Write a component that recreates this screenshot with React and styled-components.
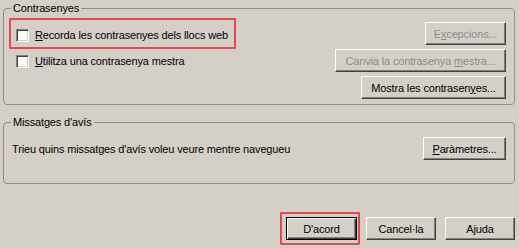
import React from 'react'
import styled, { createGlobalStyle } from 'styled-components'

const GlobalStyle = createGlobalStyle`
    body {
        margin: 0;
        background: #d4d0c8;
        font-family: "Liberation Sans", Arial, sans-serif;
        font-size: 11px;
        letter-spacing: -0.15px;
        color: #000;
    }
`

const Page = styled.div`
    display: flex;
    flex-direction: column;
    width: 519px;
    height: 248px;
    box-sizing: border-box;
    padding: 2px 4px 0 3px;
`

const Group = styled.fieldset`
    margin: 0 0 ${props => props.$gap || 0}px 0;
    padding: ${props => props.$pad};
    border: 1px solid #8e8e8e;
    border-radius: 4px;
    min-width: 0;
`

const Legend = styled.legend`
    padding: 0 2px;
    margin-left: 0;
    line-height: 13px;
`

const GroupRow = styled.div`
    display: flex;
    align-items: ${props => props.$align || 'flex-start'};
`

const Checks = styled.div`
    flex: 1;
    display: flex;
    flex-direction: column;
    gap: 13px;
    padding: 7px 0 0 5px;
`

const CheckRow = styled.label`
    position: relative;
    display: flex;
    align-items: center;
    gap: 6px;
    height: 13px;
    line-height: 13px;
    width: fit-content;
    ${props => props.$marked && `
        &::after {
            content: '';
            position: absolute;
            left: -7px;
            right: -8px;
            top: -11px;
            bottom: -7px;
            border: 2px solid #e5484d;
            border-radius: 1px;
        }
    `}
`

const CheckBox = styled.span`
    width: 13px;
    height: 13px;
    box-sizing: border-box;
    background: #fff;
    border: 1px solid;
    border-color: #808080 #fff #fff #808080;
    box-shadow: inset 1px 1px #404040, inset -1px -1px #d4d0c8;
    flex-shrink: 0;
`

const ButtonStack = styled.div`
    display: flex;
    flex-direction: column;
    align-items: flex-end;
    gap: 4px;
`

const Button = styled.button`
    position: relative;
    width: ${props => props.$w}px;
    height: 23px;
    box-sizing: border-box;
    padding: 0;
    font-family: inherit;
    font-size: 11px;
    letter-spacing: -0.15px;
    color: ${props => props.disabled ? '#8d8d8d' : '#000'};
    background: #d4d0c8;
    border: 1px solid;
    border-color: #fff #404040 #404040 #fff;
    box-shadow: inset -1px -1px #808080;
    ${props => props.$isDefault && `
        border: 1px solid #000;
        box-shadow: inset 1px 1px #fff, inset -1px -1px #404040, inset -2px -2px #808080;
    `}
    ${props => props.$marked && `
        &::after {
            content: '';
            position: absolute;
            left: -7px;
            right: -4px;
            top: -6px;
            bottom: -6px;
            border: 2px solid #e5484d;
            border-radius: 1px;
        }
    `}
`

const Info = styled.div`
    flex: 1;
    padding-left: 1px;
`

const Footer = styled.div`
    display: flex;
    justify-content: flex-end;
    gap: 9px;
`

export default function App() {
    return (
        <Page>
            <GlobalStyle />
            <Group $pad="7px 8px 5px 7px" $gap={11}>
                <Legend>Contrasenyes</Legend>
                <GroupRow>
                    <Checks>
                        <CheckRow $marked>
                            <CheckBox />
                            <span><u>R</u>ecorda les contrasenyes dels llocs web</span>
                        </CheckRow>
                        <CheckRow>
                            <CheckBox />
                            <span><u>U</u>tilitza una contrasenya mestra</span>
                        </CheckRow>
                    </Checks>
                    <ButtonStack>
                        <Button $w={81} disabled>E<u>x</u>cepcions...</Button>
                        <Button $w={171} disabled>Canvia la contrasenya <u>m</u>estra...</Button>
                        <Button $w={145}>Mostra les contrasen<u>y</u>es...</Button>
                    </ButtonStack>
                </GroupRow>
            </Group>
            <Group $pad="8px 8px 23px 7px" $gap={33}>
                <Legend>Missatges d'avís</Legend>
                <GroupRow $align="center">
                    <Info>Trieu quins missatges d'avís voleu veure mentre navegueu</Info>
                    <Button $w={83}><u>P</u>aràmetres...</Button>
                </GroupRow>
            </Group>
            <Footer>
                <Button $w={71} $isDefault $marked>D'acord</Button>
                <Button $w={70}>Cancel·la</Button>
                <Button $w={70}>Ajuda</Button>
            </Footer>
        </Page>
    )
}
